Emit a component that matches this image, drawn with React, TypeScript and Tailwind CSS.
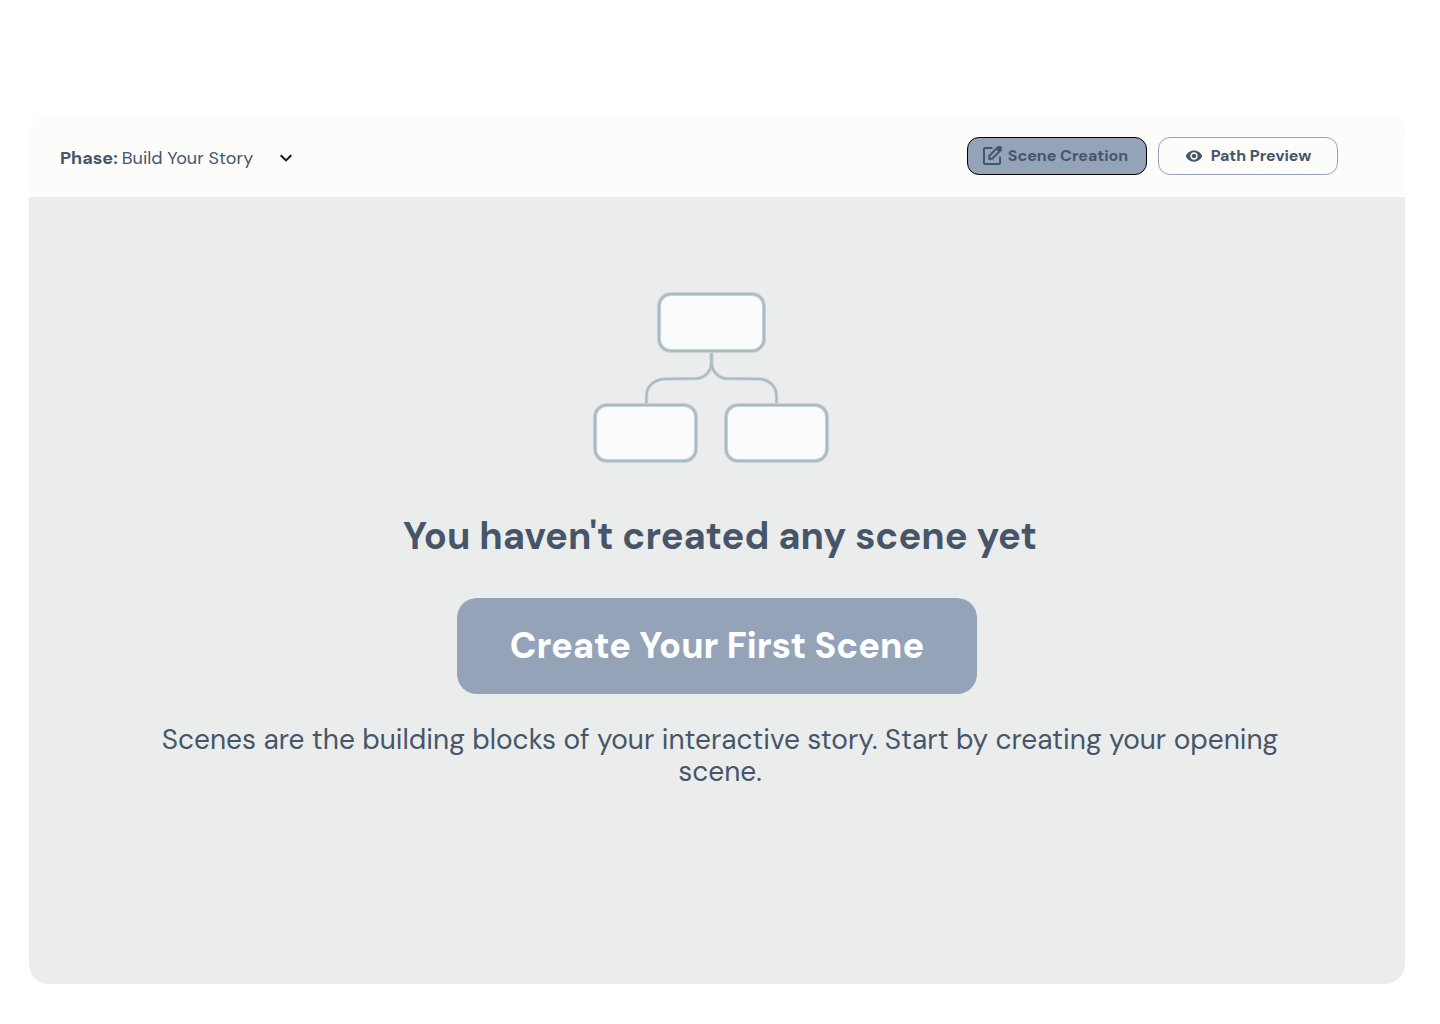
import { MdRemoveRedEye } from "react-icons/md";

function EditIcon() {
  return (
    <svg viewBox="0 0 24 24" className="size-6 shrink-0" fill="none" stroke="currentColor" strokeWidth="2" aria-hidden="true">
      <path d="M12.5 4H5Q4 4 4 5V19Q4 20 5 20H19Q20 20 20 19V12.5" />
      <path d="M9.3 14.7V11.8L17.7 3.4L20.6 6.3L12.2 14.7Z" />
      <path d="M15.8 5L18.4 2.3Q19.7 1.2 21 2.3L21.7 3Q22.9 4.3 21.7 5.6L19 8.2Z" fill="currentColor" stroke="none" />
    </svg>
  );
}

function ChevronIcon() {
  return (
    <svg viewBox="0 0 14 8" className="pointer-events-none h-2 w-3.5" fill="none" stroke="#0f172a" strokeWidth="2" aria-hidden="true">
      <path d="M1.7 1.2L7 6.4L12.3 1.2" />
    </svg>
  );
}

function SceneTree() {
  return (
    <svg viewBox="0 0 254 176" className="h-44 w-[254px]" fill="none" aria-hidden="true">
      <g stroke="#c8d4d8" strokeWidth="3.6">
        <path d="M127.5 62V72C127.5 81 121 88 113 88.5L80 89C69 90 62.5 97 62.5 106V114" />
        <path d="M127.5 62V72C127.5 81 134 88 142 88.5L176 89C186 90 192.5 97 192.5 106V114" />
      </g>
      <g stroke="#a9bbc2" strokeWidth="2">
        <path d="M127.5 62V72C127.5 81 121 88 113 88.5L80 89C69 90 62.5 97 62.5 106V114" />
        <path d="M127.5 62V72C127.5 81 134 88 142 88.5L176 89C186 90 192.5 97 192.5 106V114" />
      </g>
      <g fill="#f9fcfb" stroke="#c8d4d8" strokeWidth="4">
        <rect x="75" y="4" width="105" height="57" rx="12" />
        <rect x="11" y="115" width="101" height="56" rx="12" />
        <rect x="142" y="115" width="101" height="56" rx="12" />
      </g>
      <g stroke="#a9bbc2" strokeWidth="2.2">
        <rect x="75" y="4" width="105" height="57" rx="12" />
        <rect x="11" y="115" width="101" height="56" rx="12" />
        <rect x="142" y="115" width="101" height="56" rx="12" />
      </g>
    </svg>
  );
}

export default function App() {
  return (
    <div className="flex min-h-screen flex-col bg-white pt-[115px] pr-[35px] pb-10 pl-[29px] font-['DM_Sans','Inter',sans-serif] text-[#475569]">
      <main className="flex grow flex-col overflow-hidden rounded-[20px] bg-[#ebedec]">
        <header className="flex h-[82px] items-center justify-between bg-[#fcfcfa] pr-[67px] pl-[31px]">
          <div className="flex items-center gap-1 pt-1 text-lg">
            <label htmlFor="phase" className="font-bold">Phase:</label>
            <div className="grid items-center">
              <select id="phase" className="col-start-1 row-start-1 w-[171px] appearance-none bg-transparent">
                <option>Build Your Story</option>
              </select>
              <div className="pointer-events-none col-start-1 row-start-1 justify-self-end">
                <ChevronIcon />
              </div>
            </div>
          </div>
          <div className="flex gap-[11px] text-base font-bold">
            <button type="button" className="flex h-[38px] w-[180px] items-center justify-center gap-1 rounded-xl border border-black bg-[#94a3b8] pr-1.5">
              <EditIcon />
              Scene Creation
            </button>
            <button type="button" className="flex h-[38px] w-[180px] items-center justify-center gap-2 rounded-xl border border-[#94a3b8]">
              <MdRemoveRedEye className="size-[18px]" aria-hidden="true" />
              Path Preview
            </button>
          </div>
        </header>
        <section className="flex flex-col items-center px-[120px] pt-[93px] text-center">
          <div className="pr-3">
            <SceneTree />
          </div>
          <h1 className="mt-11 pl-1.5 text-[38px] leading-[52px] font-bold">You haven't created any scene yet</h1>
          <button type="button" className="mt-9 h-24 rounded-[20px] bg-[#94a3b8] px-[53px] text-4xl font-extrabold text-white">
            Create Your First Scene
          </button>
          <p className="mt-[30px] pl-1.5 text-[28px] leading-8">
            Scenes are the building blocks of your interactive story. Start by creating your opening scene.
          </p>
        </section>
      </main>
    </div>
  );
}
